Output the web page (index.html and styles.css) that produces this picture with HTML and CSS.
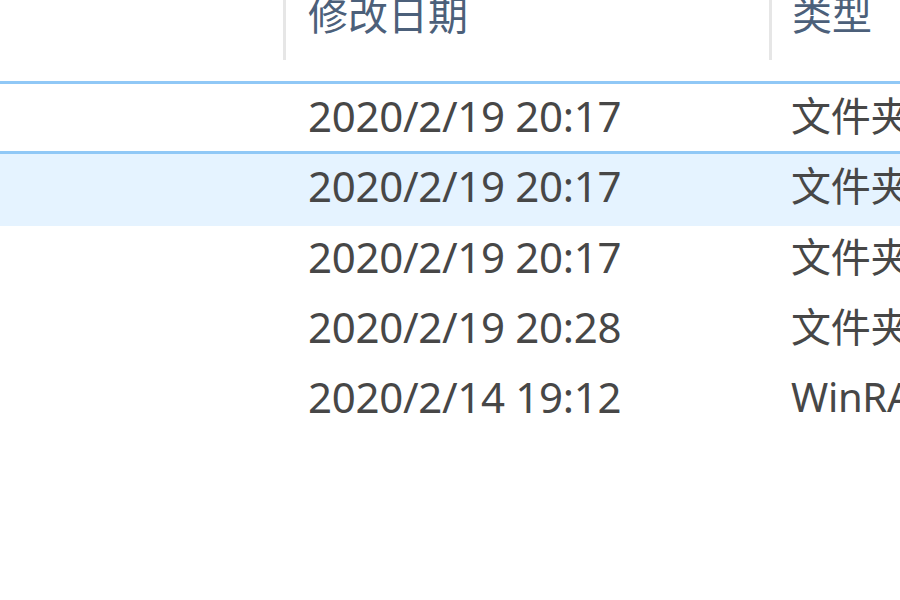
FILE: index.html
```html
<!DOCTYPE html>
<html lang="zh">
<head>
<meta charset="utf-8">
<link rel="stylesheet" href="styles.css">
</head>
<body>
<div class="view">
  <div class="header">
    <div class="hcell name"></div>
    <div class="hcell date">修改日期</div>
    <div class="hcell type">类型</div>
  </div>
  <div class="rows">
    <div class="row focus">
      <div class="cell name"></div>
      <div class="cell date">2020/2/19 20:17</div>
      <div class="cell type">文件夹</div>
    </div>
    <div class="row hover">
      <div class="cell name"></div>
      <div class="cell date">2020/2/19 20:17</div>
      <div class="cell type">文件夹</div>
    </div>
    <div class="row">
      <div class="cell name"></div>
      <div class="cell date">2020/2/19 20:17</div>
      <div class="cell type">文件夹</div>
    </div>
    <div class="row">
      <div class="cell name"></div>
      <div class="cell date">2020/2/19 20:28</div>
      <div class="cell type">文件夹</div>
    </div>
    <div class="row">
      <div class="cell name"></div>
      <div class="cell date">2020/2/14 19:12</div>
      <div class="cell type">WinRAR 压缩文件</div>
    </div>
  </div>
</div>
</body>
</html>
```
FILE: styles.css
```css
html, body {
  margin: 0;
  padding: 0;
  background: #ffffff;
  width: 900px;
  height: 600px;
  overflow: hidden;
}
.view {
  font-family: "Noto Sans", "Noto Sans CJK SC", sans-serif;
  width: 900px;
}
.header {
  display: grid;
  grid-template-columns: 283px 486px 1fr;
  height: 60px;
}
.hcell {
  color: #4c607a;
  font-size: 40px;
  line-height: 30px;
  padding-left: 22px;
  white-space: nowrap;
  overflow: hidden;
}
.hcell.date, .hcell.type {
  border-left: 3px solid #e6e6e6;
}
.hcell.type {
  padding-left: 20px;
}
.rows {
  margin-top: 21px;
}
.row {
  box-sizing: border-box;
  display: grid;
  grid-template-columns: 285px 485px 1fr;
  align-items: start;
  height: 70.3px;
  border-top: 3px solid transparent;
}
.row.focus {
  border-top-color: #90c8f6;
}
.row.hover {
  border-top-color: #90c8f6;
  background: #e5f3ff;
  height: 74.3px;
  margin-bottom: -4px;
}
.cell {
  color: #474747;
  font-size: 42px;
  line-height: 63px;
  padding-left: 23px;
  white-space: nowrap;
  overflow: hidden;
  letter-spacing: -0.3px;
}
.cell.type {
  font-size: 40px;
  padding-left: 21px;
}
```
